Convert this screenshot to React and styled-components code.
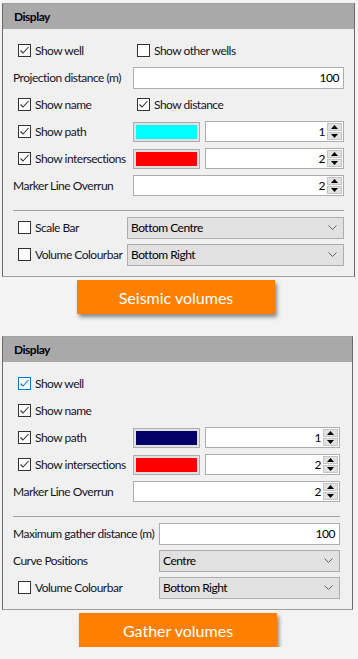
import React from 'react';
import styled, { createGlobalStyle } from 'styled-components';

const GlobalStyle = createGlobalStyle`
  body {
    margin: 0;
    background: #f3f3f3;
    font-family: Lato, "Liberation Sans", sans-serif;
    font-size: 12px;
    letter-spacing: -0.5px;
    color: #141428;
  }
`;

const Page = styled.div`
  padding-top: 3px;
  display: flex;
  flex-direction: column;
`;

const Panel = styled.section`
  margin-left: 2px;
  width: ${p => p.$width}px;
  box-sizing: border-box;
  background: #f0f0f0;
  border: 1px solid #a0a0a0;
  border-left-color: #6a6a6a;
  border-right-color: #6a6a6a;
`;

const Header = styled.div`
  height: 25px;
  line-height: 25px;
  background: #a9a9a9;
  padding-left: 11px;
  font-weight: 700;
  color: #000;
`;

const Body = styled.div`
  padding: 8px ${p => p.$pr}px 8px 10px;
`;

const Row = styled.div`
  display: flex;
  align-items: center;
  height: 27px;
  white-space: nowrap;
`;

const Cell = styled.div`
  width: ${p => p.$w}px;
  flex-shrink: 0;
  display: flex;
  align-items: center;
`;

const CheckLabel = styled.label`
  display: flex;
  align-items: center;
  gap: 4px;
  padding-left: ${p => p.$pl ?? 5}px;
`;

const Box = styled.span`
  width: 13px;
  height: 13px;
  box-sizing: border-box;
  border: 1px solid ${p => (p.$focus ? '#0078d7' : '#333333')};
  background: #ffffff;
  display: flex;
  align-items: center;
  justify-content: center;
`;

const Separator = styled.div`
  height: 1px;
  background: #a0a0a0;
  margin: 11px 0 3px;
`;

const Field = styled.div`
  flex: 1;
  height: 22px;
  box-sizing: border-box;
  border: 1px solid #adadad;
  background: #ffffff;
  display: flex;
  align-items: center;
  justify-content: flex-end;
  padding-right: 4px;
  color: #000;
`;

const Swatch = styled.div`
  width: 67px;
  height: 20px;
  box-sizing: border-box;
  border: 1px solid #adadad;
  background: #e1e1e1;
  padding: 2px;
  margin-right: 5px;
  flex-shrink: 0;

  &::after {
    content: '';
    display: block;
    height: 100%;
    background: ${p => p.$color};
  }
`;

const Spin = styled.div`
  flex: 1;
  height: 21px;
  box-sizing: border-box;
  border: 1px solid #adadad;
  background: #ffffff;
  display: flex;
  align-items: stretch;
  color: #000;
`;

const SpinValue = styled.div`
  flex: 1;
  display: flex;
  align-items: center;
  justify-content: flex-end;
  padding-right: 2px;
`;

const SpinButtons = styled.div`
  width: 15px;
  margin: 1px 1px 1px 0;
  display: flex;
  flex-direction: column;
  gap: 1px;
`;

const SpinButton = styled.div`
  flex: 1;
  background: #e1e1e1;
  border: 1px solid #c4c4c4;
  display: flex;
  align-items: center;
  justify-content: center;
`;

const Combo = styled.div`
  flex: 1;
  height: 22px;
  box-sizing: border-box;
  border: 1px solid #adadad;
  background: #e1e1e1;
  display: flex;
  align-items: center;
  justify-content: space-between;
  padding: 0 6px 0 3px;
  color: #000;
`;

const OrangeButton = styled.div`
  margin: 3px 0 ${p => p.$mb}px ${p => p.$ml}px;
  width: 198px;
  height: 34px;
  background: #ff8000;
  color: #ffffff;
  font-size: 16px;
  letter-spacing: 0;
  display: flex;
  align-items: center;
  justify-content: center;
  box-shadow: 2px 3px 4px rgba(0, 0, 0, 0.45);
`;

function CheckBox({ checked, focus }) {
  return (
    <Box $focus={focus}>
      {checked && (
        <svg width="11" height="11" viewBox="0 0 11 11">
          <path
            d="M1.5 5.5 L4 8 L9.5 2"
            fill="none"
            stroke={focus ? '#0078d7' : '#333'}
            strokeWidth="1.1"
          />
        </svg>
      )}
    </Box>
  );
}

function Check({ label, checked, focus, pl }) {
  return (
    <CheckLabel $pl={pl}>
      <CheckBox checked={checked} focus={focus} />
      {label}
    </CheckLabel>
  );
}

function SpinBox({ value }) {
  return (
    <Spin>
      <SpinValue>{value}</SpinValue>
      <SpinButtons>
        <SpinButton>
          <svg width="7" height="4" viewBox="0 0 7 4"><path d="M0 4 L3.5 0 L7 4 Z" fill="#000" /></svg>
        </SpinButton>
        <SpinButton>
          <svg width="7" height="4" viewBox="0 0 7 4"><path d="M0 0 L7 0 L3.5 4 Z" fill="#000" /></svg>
        </SpinButton>
      </SpinButtons>
    </Spin>
  );
}

function Select({ value }) {
  return (
    <Combo>
      {value}
      <svg width="9" height="5" viewBox="0 0 9 5">
        <path d="M0.5 0.5 L4.5 4.5 L8.5 0.5" fill="none" stroke="#606060" strokeWidth="1" />
      </svg>
    </Combo>
  );
}

export default function App() {
  return (
    <Page>
      <GlobalStyle />
      <Panel $width={353}>
        <Header>Display</Header>
        <Body $pr={10}>
          <Row>
            <Cell $w={120}><Check label="Show well" checked /></Cell>
            <Check label="Show other wells" pl={4} />
          </Row>
          <Row>
            <Cell $w={120}>Projection distance (m)</Cell>
            <Field>100</Field>
          </Row>
          <Row>
            <Cell $w={120}><Check label="Show name" checked /></Cell>
            <Check label="Show distance" checked pl={4} />
          </Row>
          <Row>
            <Cell $w={120}><Check label="Show path" checked /></Cell>
            <Swatch $color="#00ffff" />
            <SpinBox value="1" />
          </Row>
          <Row>
            <Cell $w={120}><Check label="Show intersections" checked /></Cell>
            <Swatch $color="#ff0000" />
            <SpinBox value="2" />
          </Row>
          <Row>
            <Cell $w={120}>Marker Line Overrun</Cell>
            <SpinBox value="2" />
          </Row>
          <Separator />
          <Row>
            <Cell $w={114}><Check label="Scale Bar" /></Cell>
            <Select value="Bottom Centre" />
          </Row>
          <Row>
            <Cell $w={114}><Check label="Volume Colourbar" /></Cell>
            <Select value="Bottom Right" />
          </Row>
        </Body>
      </Panel>
      <OrangeButton $ml={77} $mb={22}>Seismic volumes</OrangeButton>

      <Panel $width={351}>
        <Header>Display</Header>
        <Body $pr={12}>
          <Row>
            <Check label="Show well" checked focus />
          </Row>
          <Row>
            <Check label="Show name" checked />
          </Row>
          <Row>
            <Cell $w={120}><Check label="Show path" checked /></Cell>
            <Swatch $color="#000066" />
            <SpinBox value="1" />
          </Row>
          <Row>
            <Cell $w={120}><Check label="Show intersections" checked /></Cell>
            <Swatch $color="#ff0000" />
            <SpinBox value="2" />
          </Row>
          <Row>
            <Cell $w={120}>Marker Line Overrun</Cell>
            <SpinBox value="2" />
          </Row>
          <Separator />
          <Row>
            <Cell $w={146}>Maximum gather distance (m)</Cell>
            <Field>100</Field>
          </Row>
          <Row>
            <Cell $w={146}>Curve Positions</Cell>
            <Select value="Centre" />
          </Row>
          <Row>
            <Cell $w={146}><Check label="Volume Colourbar" /></Cell>
            <Select value="Bottom Right" />
          </Row>
        </Body>
      </Panel>
      <OrangeButton $ml={79} $mb={0}>Gather volumes</OrangeButton>
    </Page>
  );
}
